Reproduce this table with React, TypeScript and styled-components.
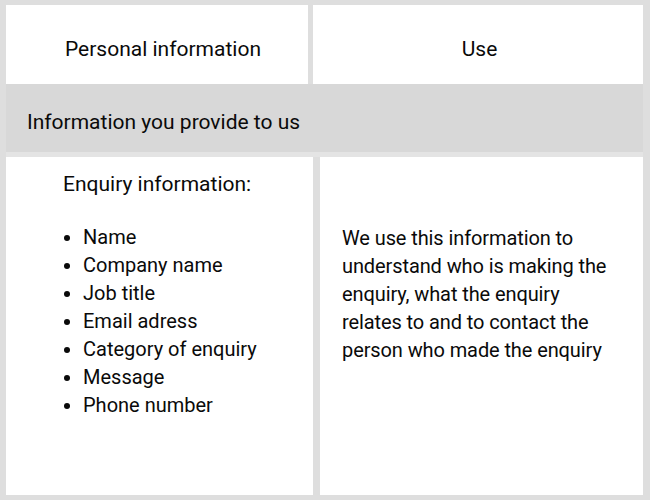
import React from "react";
import styled, { createGlobalStyle } from "styled-components";

const Global = createGlobalStyle`
  html, body { margin: 0; padding: 0; background: #ffffff; }
  * { box-sizing: border-box; }
`;

const Frame = styled.div`
  width: 650px;
  height: 500px;
  background: #dedede;
  padding: 5px 7px 5px 6px;
  display: flex;
  flex-direction: column;
  font-family: Roboto, "Liberation Sans", sans-serif;
  font-size: 20px;
  line-height: 28px;
  color: #0a0a0a;
`;

const HeaderRow = styled.div`
  display: grid;
  grid-template-columns: 302px 330px;
  column-gap: 5px;
  height: 79px;
`;

const HeaderCell = styled.div<{ $shift?: number }>`
  background: #ffffff;
  display: flex;
  align-items: center;
  justify-content: center;
  padding-top: 8px;
  padding-left: ${(p) => p.$shift ?? 0}px;
  font-size: 21px;
`;

const SectionRow = styled.div`
  height: 73px;
  background: #d8d8d8;
  display: flex;
  align-items: center;
  padding: 7px 0 0 21px;
  border-bottom: 5px solid #e4e4e4;
  font-size: 21px;
`;

const BodyRow = styled.div`
  flex: 1;
  display: grid;
  grid-template-columns: 307px 323px;
  column-gap: 7px;
`;

const BodyCell = styled.div<{ $top: number; $left: number }>`
  background: #ffffff;
  padding: ${(p) => p.$top}px 20px 0 ${(p) => p.$left}px;
`;

const Lead = styled.p`
  margin: 0 0 25px;
  font-size: 21px;
`;

const List = styled.ul`
  margin: 0;
  padding-left: 20px;
  list-style: disc;
`;

const Para = styled.p`
  margin: 0;
  max-width: 272px;
  letter-spacing: -0.1px;
`;

const items = [
  "Name",
  "Company name",
  "Job title",
  "Email adress",
  "Category of enquiry",
  "Message",
  "Phone number",
];

export default function App() {
  return (
    <>
      <Global />
      <Frame>
        <HeaderRow>
          <HeaderCell $shift={12}>Personal information</HeaderCell>
          <HeaderCell $shift={3}>Use</HeaderCell>
        </HeaderRow>
        <SectionRow>Information you provide to us</SectionRow>
        <BodyRow>
          <BodyCell $top={13} $left={57}>
            <Lead>Enquiry information:</Lead>
            <List>
              {items.map((it) => (
                <li key={it}>{it}</li>
              ))}
            </List>
          </BodyCell>
          <BodyCell $top={67} $left={22}>
            <Para>
              We use this information to understand who is making the enquiry,
              what the enquiry relates to and to contact the person who made
              the enquiry
            </Para>
          </BodyCell>
        </BodyRow>
      </Frame>
    </>
  );
}
